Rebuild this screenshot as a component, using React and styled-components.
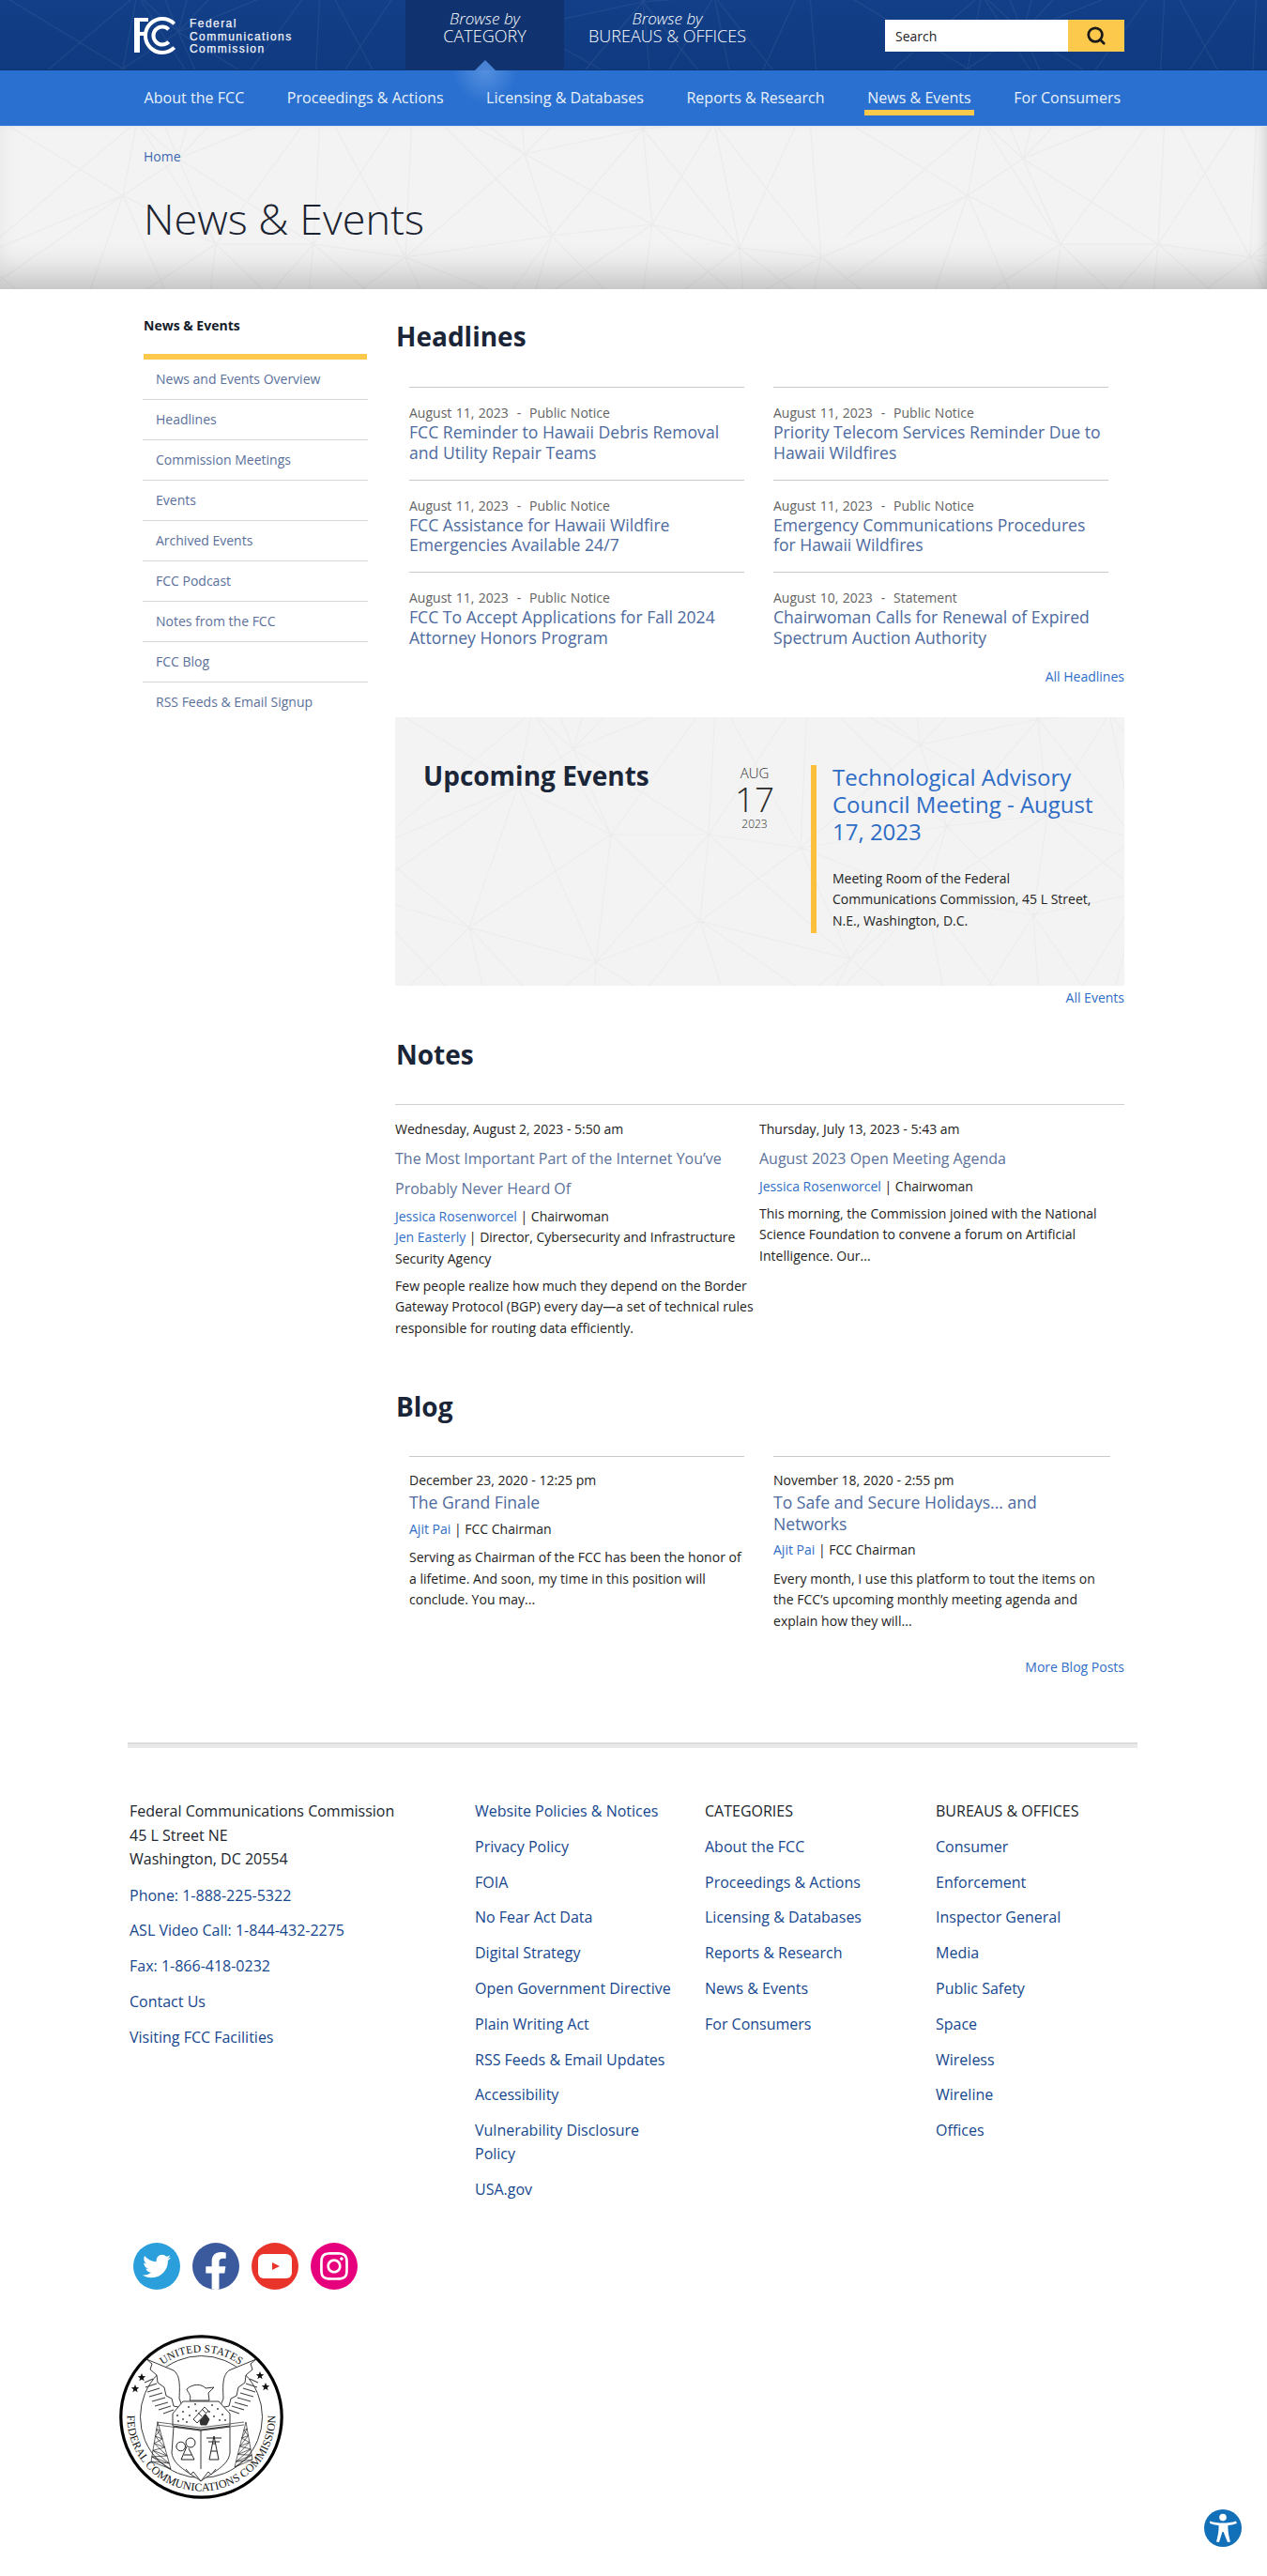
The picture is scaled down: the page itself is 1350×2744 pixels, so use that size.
import React from 'react';
import styled, { createGlobalStyle } from 'styled-components';
import { Search } from 'lucide-react';
import { FaTwitter, FaFacebookF, FaInstagram } from 'react-icons/fa';

const meshPattern = (stroke, width = 900, height = 560) => {
  const cols = 8;
  const rows = 5;
  const jitter = (a, b) => {
    const v = Math.sin(a * 12.9898 + b * 78.233) * 43758.5453;
    return v - Math.floor(v) - 0.5;
  };
  const cw = width / cols;
  const ch = height / rows;
  const pt = (i, j) => {
    const wi = ((i % cols) + cols) % cols;
    const wj = ((j % rows) + rows) % rows;
    return [i * cw + jitter(wi, wj) * cw * 0.7, j * ch + jitter(wj + 7, wi + 3) * ch * 0.7];
  };
  let d = '';
  for (let i = -1; i <= cols; i += 1) {
    for (let j = -1; j <= rows; j += 1) {
      const [x, y] = pt(i, j);
      [[1, 0], [0, 1], [1, 1], [-1, 1]].forEach(([a, b]) => {
        const [x2, y2] = pt(i + a, j + b);
        d += `M${x.toFixed(0)} ${y.toFixed(0)}L${x2.toFixed(0)} ${y2.toFixed(0)}`;
      });
    }
  }
  const svg = `<svg xmlns="http://www.w3.org/2000/svg" width="${width}" height="${height}"><path d="${d}" fill="none" stroke="${stroke}" stroke-width="1.2"/></svg>`;
  return `url("data:image/svg+xml,${encodeURIComponent(svg)}")`;
};

const darkMesh = meshPattern('rgba(255,255,255,0.06)');
const lightMesh = meshPattern('rgba(0,0,0,0.028)');

const Global = createGlobalStyle`
  html, body { margin: 0; padding: 0; background: #fff; }
  body { font-family: "Open Sans", "Noto Sans", sans-serif; color: #1c1c1c; }
  * { box-sizing: border-box; }
  a { text-decoration: none; color: inherit; }
`;

const Page = styled.div`
  width: 1350px;
  min-height: 2744px;
  position: relative;
  overflow: hidden;
`;

const TopBar = styled.header`
  height: 75px;
  display: flex;
  padding: 0 152px 0 142px;
  background-color: #113d85;
  background-image: ${darkMesh}, linear-gradient(180deg, #123f88 0%, #103a80 100%);
  border-bottom: 1px solid #0d3470;
`;

const Logo = styled.a`
  width: 290px;
  height: 74px;
  display: flex;
  align-items: flex-start;
  padding-top: 18px;
  gap: 13px;
  svg { flex: none; }
`;

const LogoText = styled.span`
  font-family: "Liberation Sans", Arial, sans-serif;
  font-size: 12px;
  font-weight: 400;
  line-height: 13.5px;
  letter-spacing: 1.45px;
  color: #f2f5fa;
  padding-top: 1px;
  -webkit-text-stroke: 0.25px #f2f5fa;
`;

const BrowseTab = styled.a`
  position: relative;
  width: ${(p) => p.$width}px;
  height: 74px;
  display: flex;
  flex-direction: column;
  align-items: center;
  padding-top: 11px;
  color: #fff;
  background: ${(p) => (p.$active ? '#10336f' : 'transparent')};
  ${(p) => p.$active && `
    &::before {
      content: "";
      position: absolute;
      left: 50%;
      top: 75px;
      width: 70px;
      height: 36px;
      transform: translateX(-50%);
      background: radial-gradient(ellipse at 50% 0, rgba(120,170,235,.55), rgba(120,170,235,0) 70%);
      z-index: 2;
    }
    &::after {
      content: "";
      position: absolute;
      left: 50%;
      bottom: -1px;
      transform: translateX(-50%);
      border-left: 11px solid transparent;
      border-right: 11px solid transparent;
      border-bottom: 11px solid #4a83d6;
    }
  `}
`;

const BrowseSmall = styled.span`
  font-size: 17px;
  font-style: italic;
  font-weight: 300;
  line-height: 18px;
`;

const BrowseBig = styled.span`
  font-size: 18px;
  font-weight: 300;
  line-height: 18px;
`;

const SearchForm = styled.form`
  margin: 21px 0 0 auto;
  width: 255px;
  height: 34px;
  display: flex;
`;

const SearchField = styled.div`
  flex: 1;
  background: #fff;
  font-size: 14px;
  line-height: 35px;
  padding-left: 11px;
  color: #1d1d1d;
`;

const SearchButton = styled.div`
  width: 60px;
  background: #fcc94d;
  display: flex;
  align-items: center;
  justify-content: center;
  color: #1a1a1a;
`;

const Nav = styled.nav`
  height: 59px;
  display: flex;
  padding: 0 0 0 150.5px;
  gap: 39.5px;
  background: #2a70d0;
`;

const NavItem = styled.a`
  height: 48px;
  padding: 20px 3px 0;
  font-size: 16px;
  line-height: 18px;
  letter-spacing: 0.04px;
  color: #e8f0fa;
  border-bottom: ${(p) => (p.$active ? '6px solid #fcc94d' : '0')};
`;

const Hero = styled.section`
  height: 174px;
  padding: 23px 0 0 153px;
  background-color: #f3f3f4;
  background-image: ${lightMesh};
  border-top: 1px solid #dbe7f0;
  box-shadow: inset 0 -34px 34px -18px rgba(0, 0, 0, 0.2), inset -8px 0 14px -8px rgba(0, 0, 0, 0.15);
`;

const Crumb = styled.a`
  display: block;
  font-size: 14px;
  line-height: 18px;
  color: #3c68b0;
`;

const PageTitle = styled.h1`
  margin: 27px 0 0;
  font-size: 45px;
  font-weight: 300;
  line-height: 60px;
  color: #1b2230;
`;

const Body = styled.div`
  display: flex;
  padding-left: 152px;
`;

const Sidebar = styled.aside`
  width: 240px;
  margin-right: 29px;
  padding-top: 30px;
`;

const SideTitle = styled.div`
  padding-left: 1px;
  font-size: 14px;
  font-weight: 700;
  line-height: 18px;
  color: #151d2b;
  padding-bottom: 21px;
`;

const SideBar = styled.div`
  height: 6px;
  margin: 0 1px;
  background: #fcc94d;
`;

const SideItem = styled.a`
  display: block;
  height: 43px;
  padding-left: 14px;
  font-size: 14px;
  line-height: 41px;
  color: #5a709b;
  border-bottom: ${(p) => (p.$last ? '0' : '1px solid #d6d6d6')};
`;

const Main = styled.main`
  width: 777px;
`;

const SectionTitle = styled.h2`
  margin: ${(p) => p.$top || 0}px 0 0;
  padding-left: 1px;
  font-size: 28px;
  font-weight: 700;
  line-height: 40px;
  color: #1a2537;
`;

const HeadlineGrid = styled.div`
  margin-top: 34px;
  padding-left: 15px;
  display: grid;
  grid-template-columns: 357px 357px;
  column-gap: 31px;
`;

const Headline = styled.article`
  height: 98.5px;
  border-top: 1px solid #c9c9c9;
  padding-top: 16px;
`;

const Meta = styled.div`
  font-size: 14px;
  line-height: 21px;
  color: #636363;
  white-space: pre;
  word-spacing: 0.8px;
`;

const CardTitle = styled.a`
  display: block;
  font-size: 17.6px;
  line-height: 21.5px;
  color: #4d6a9e;
`;

const MoreLink = styled.a`
  display: block;
  text-align: right;
  font-size: 14px;
  line-height: 20px;
  color: #2f6dc6;
  margin-top: ${(p) => p.$top || 3}px;
`;

const EventBox = styled.section`
  margin-top: 33px;
  height: 286px;
  display: flex;
  background-color: #f3f3f4;
  background-image: ${lightMesh};
`;

const EventHeading = styled.h2`
  width: 348px;
  margin: 42px 0 0;
  padding-left: 30px;
  font-size: 28px;
  font-weight: 700;
  line-height: 40px;
  color: #1a2537;
`;

const DateStack = styled.div`
  width: 70px;
  margin: 49px 25px 0 0;
  display: flex;
  flex-direction: column;
  align-items: center;
  font-weight: 300;
  color: #2a2a2a;
`;

const DateMonth = styled.span`
  font-size: 15px;
  line-height: 20px;
`;

const DateDay = styled.span`
  font-size: 37px;
  line-height: 36px;
`;

const DateYear = styled.span`
  font-size: 12px;
  line-height: 18px;
  margin-top: 0;
`;

const EventBody = styled.div`
  display: flow-root;
  align-self: flex-start;
  width: 320px;
  margin-top: 51px;
  padding: 0 0 2px 17px;
  border-left: 6px solid #fcc03c;
`;

const EventTitle = styled.a`
  display: block;
  margin-top: -2px;
  font-size: 24px;
  line-height: 29px;
  color: #2e6cc5;
`;

const EventText = styled.p`
  margin: 25px 0 0;
  font-size: 14px;
  line-height: 22.5px;
  color: #222;
`;

const NotesGrid = styled.div`
  margin-top: 33px;
  border-top: 1px solid #cfcfcf;
  padding-top: 16px;
  display: grid;
  grid-template-columns: 388px 370px;
`;

const Stamp = styled.div`
  font-size: 14px;
  line-height: 20px;
  color: #222;
`;

const NoteTitle = styled.a`
  display: block;
  margin-top: 5px;
  font-size: 16px;
  line-height: 32px;
  color: #5c729b;
`;

const Byline = styled.div`
  margin-top: ${(p) => p.$top || 3}px;
  font-size: 14px;
  line-height: 22.5px;
  color: #222;
`;

const Person = styled.a`
  color: #2f6dc6;
`;

const Summary = styled.p`
  margin: ${(p) => p.$top || 6.5}px 0 0;
  font-size: 14px;
  line-height: 22.5px;
  letter-spacing: 0.03px;
  color: #222;
`;

const BlogGrid = styled.div`
  margin-top: 33px;
  padding-left: 15px;
  display: grid;
  grid-template-columns: 357px 359px;
  column-gap: 31px;
`;

const BlogCard = styled.article`
  border-top: 1px solid #c9c9c9;
  padding-top: 15px;
`;

const BlogTitle = styled.a`
  display: block;
  margin-top: 2px;
  font-size: 17.6px;
  line-height: 22.5px;
  color: #4d6a9e;
`;

const Rule = styled.div`
  margin: 70px 0 0 136px;
  width: 1076px;
  height: 6px;
  background: #e9e9e9;
  border-top: 2px solid #dcdcdc;
`;

const Footer = styled.footer`
  margin-top: 55px;
  padding-left: 138px;
  display: grid;
  grid-template-columns: 368px 245px 246px 200px;
`;

const FooterColumn = styled.div`
  display: flex;
  flex-direction: column;
  align-items: flex-start;
  padding-right: ${(p) => p.$pad || 0}px;
`;

const Address = styled.div`
  font-size: 16px;
  line-height: 25.5px;
  color: #20252d;
  margin-bottom: 13px;
`;

const FooterLabel = styled.div`
  font-size: 16px;
  line-height: 25px;
  color: #20252d;
  margin-bottom: 12.8px;
`;

const FooterLink = styled.a`
  font-size: 16px;
  line-height: 25px;
  margin-bottom: 12.8px;
  color: #16478e;
`;

const SocialRow = styled.div`
  margin: 31px 0 0 142px;
  display: flex;
  gap: 13px;
`;

const SocialDisc = styled.a`
  width: 50px;
  height: 50px;
  border-radius: 50%;
  display: flex;
  align-items: center;
  justify-content: center;
  background: ${(p) => p.$bg};
  color: #fff;
  overflow: hidden;
`;

const SealWrap = styled.div`
  margin: 48px 0 0 127px;
  width: 175px;
  height: 175px;
`;

const AccessButton = styled.a`
  position: absolute;
  right: 27px;
  bottom: 31px;
  width: 40px;
  height: 40px;
`;

const SealText = styled.text`
  font-family: "Liberation Serif", "Times New Roman", serif;
  font-size: ${(p) => p.$size}px;
  letter-spacing: ${(p) => p.$track}px;
  fill: #111;
`;

const FccLogo = () => (
  <svg width="47" height="40" viewBox="0 0 47 40" aria-hidden="true">
    <path d="M1 1H16V5H7V16H15V20H7V38H1Z" fill="#fff" />
    <path d="M43.7 7.3A18 18 0 1 0 43.7 32.7" fill="none" stroke="#fff" strokeWidth="4" />
    <path d="M37.7 13.3A9.500 9.500 0 1 0 37.7 26.700" fill="none" stroke="#fff" strokeWidth="4" />
  </svg>
);

const YoutubeGlyph = () => (
  <svg width="36" height="26" viewBox="0 0 36 26" aria-hidden="true">
    <rect width="36" height="26" rx="6" fill="#fff" />
    <path d="M15 9l8 4-8 4z" fill="#e9342b" />
  </svg>
);

const AccessGlyph = () => (
  <svg width="40" height="40" viewBox="0 0 40 40" aria-hidden="true">
    <circle cx="20" cy="20" r="20" fill="#1270b8" />
    <circle cx="20" cy="8.6" r="3.8" fill="#fff" />
    <path d="M6 12.5c4 1.4 9 2 14 2s10-.6 14-2l.8 2.6c-3.4 1.2-6.6 1.8-9.4 2.1 0 5 .3 9 2.6 17.3l-3 .6L20.6 24h-1.2l-3.4 11.1-3-.6c2.3-8.3 2.6-12.300 2.6-17.300-2.800-.3-6-.9-9.400-2.100z" fill="#fff" />
  </svg>
);

const lerp = (a, b, t) => a + (b - a) * t;

const Tower = ({ apex, left, right }) => {
  const steps = [0.18, 0.36, 0.54, 0.72, 0.88, 1];
  const at = (side, t) => [lerp(apex[0], side[0], t), lerp(apex[1], side[1], t)];
  let d = `M${apex}L${left}M${apex}L${right}`;
  steps.forEach((t, i) => {
    const a = at(left, t);
    const b = at(right, t);
    d += `M${a}L${b}`;
    if (i > 0) {
      const pa = at(left, steps[i - 1]);
      const pb = at(right, steps[i - 1]);
      d += `M${pa}L${b}M${pb}L${a}`;
    }
  });
  return <path d={d} fill="none" stroke="#222" strokeWidth="0.7" />;
};

const Seal = () => (
  <svg width="175" height="175" viewBox="0 0 175 175" role="img" aria-label="Seal of the Federal Communications Commission">
    <defs>
      <path id="sealTop" d="M18.500 87.500A69 69 0 0 1 156.500 87.500" />
      <path id="sealBottom" d="M11.200 67A79 79 0 1 0 163.800 67" />
    </defs>
    <circle cx="87.500" cy="87.500" r="85.700" fill="#fff" stroke="#000" strokeWidth="3.200" />
    <circle cx="87.500" cy="87.500" r="65" fill="none" stroke="#222" strokeWidth="0.900" />
    <path d="M29 26A84 84 0 0 1 146 26" fill="none" stroke="#222" strokeWidth="0.800" />
    <SealText $size={11.5} $track={0.2}><textPath href="#sealTop" startOffset="50%" textAnchor="middle">UNITED STATES</textPath></SealText>
    <SealText $size={12} $track={0.15}><textPath href="#sealBottom" startOffset="50%" textAnchor="middle">FEDERAL COMMUNICATIONS COMMISSION</textPath></SealText>
    <g fill="#111">
      <path d="M24 41l1.200 3 3 .2-2.400 2 .8 3-2.600-1.700-2.600 1.700.8-3-2.400-2 3-.2z" />
      <path d="M17 53l1.200 3 3 .2-2.400 2 .8 3-2.600-1.700-2.600 1.700.8-3-2.400-2 3-.2z" />
      <path d="M150 39l1.200 3 3 .2-2.400 2 .8 3-2.600-1.700-2.600 1.700.8-3-2.400-2 3-.2z" />
      <path d="M156 51l1.200 3 3 .2-2.400 2 .8 3-2.600-1.700-2.600 1.700.8-3-2.400-2 3-.2z" />
    </g>
    <g fill="none" stroke="#444" strokeWidth="1.100">
      <path d="M27 51L36 47M28 56L40 52M30 61L43 57M32 66L46 62M35 71L49 67M38 76L52 72M42 80L55 76M47 84L58 80" />
      <path d="M148 51L139 47M147 56L135 52M145 61L132 57M143 66L129 62M140 71L126 67M137 76L123 72M133 80L120 76M128 84L117 80" />
    </g>
    <g fill="#fff" stroke="#222" strokeWidth="0.900" strokeLinejoin="round">
      <path d="M29 26L58 38C64 43 65 50 64 68L68 78L58 76L56 68L50 65L48 56L41 51L40 43L33 37L35 31Z" />
      <path d="M146 26L117 38C111 43 110 50 111 68L107 78L117 76L119 68L125 65L127 56L134 51L135 43L142 37L140 31Z" />
      <path d="M75 70C78 65 72 60 72 58C78 52 88 52 92 57L101 56L95 62L96 70Z" />
      <path d="M68 71H106L118 84L118 97L87 101L57 97L57 84Z" />
      <path d="M58 98L87 102L118 98L118 126C116 140 100 146 87 156C74 146 58 140 56 126Z" />
      <path d="M87 102V152" />
      <path d="M71 143L76 149L79 146L87 156L95 146L98 149L103 143" />
    </g>
    <path d="M40 93L86 99L133 93M40 96L86 102L133 96" fill="none" stroke="#444" strokeWidth="0.800" />
    <g fill="#333">
      {[[62,86],[68,82],[74,77],[81,74],[68,90],[75,86],[72,93],[63,92],[99,75],[105,79],[110,85],[101,87],[107,91],[113,91],[96,82],[82,81]].map(([x, y]) => (
        <circle key={`${x}-${y}`} cx={x} cy={y} r="0.900" />
      ))}
    </g>
    <g stroke="#222" fill="#fff" strokeWidth="0.900">
      <path d="M79 90L91 77L95 81L83 94Z" />
      <path d="M86 92L92 85L96 90L93 96L87 96Z" fill="#333" />
      <path d="M84 83l4 4M88 79l4 4" />
    </g>
    <Tower apex={[41, 93]} left={[34, 135]} right={[55, 143]} />
    <Tower apex={[135, 93]} left={[123, 141]} right={[142, 133]} />
    <g fill="none" stroke="#222" strokeWidth="1">
      <circle cx="65.700" cy="119" r="4.800" />
      <circle cx="76" cy="115" r="5" />
      <path d="M72 119L66 133H80L74 121M69 128H77" />
      <path d="M101 108L96 133M101 108L106 133M96 133H106M98 124H104M99 116H103M93 110H109M95 114H107" />
    </g>
  </svg>
);

const NAV = ['About the FCC', 'Proceedings & Actions', 'Licensing & Databases', 'Reports & Research', 'News & Events', 'For Consumers'];
const SIDE = ['News and Events Overview', 'Headlines', 'Commission Meetings', 'Events', 'Archived Events', 'FCC Podcast', 'Notes from the FCC', 'FCC Blog', 'RSS Feeds & Email Signup'];
const HEADLINES = [
  ['August 11, 2023  -  Public Notice', 'FCC Reminder to Hawaii Debris Removal and Utility Repair Teams'],
  ['August 11, 2023  -  Public Notice', 'Priority Telecom Services Reminder Due to Hawaii Wildfires'],
  ['August 11, 2023  -  Public Notice', 'FCC Assistance for Hawaii Wildfire Emergencies Available 24/7'],
  ['August 11, 2023  -  Public Notice', 'Emergency Communications Procedures for Hawaii Wildfires'],
  ['August 11, 2023  -  Public Notice', 'FCC To Accept Applications for Fall 2024 Attorney Honors Program'],
  ['August 10, 2023  -  Statement', 'Chairwoman Calls for Renewal of Expired Spectrum Auction Authority'],
];
const F_CONTACT = ['Phone: 1-888-225-5322', 'ASL Video Call: 1-844-432-2275', 'Fax: 1-866-418-0232', 'Contact Us', 'Visiting FCC Facilities'];
const F_POLICY = ['Website Policies & Notices', 'Privacy Policy', 'FOIA', 'No Fear Act Data', 'Digital Strategy', 'Open Government Directive', 'Plain Writing Act', 'RSS Feeds & Email Updates', 'Accessibility', 'Vulnerability Disclosure Policy', 'USA.gov'];
const F_CATS = ['About the FCC', 'Proceedings & Actions', 'Licensing & Databases', 'Reports & Research', 'News & Events', 'For Consumers'];
const F_BUREAUS = ['Consumer', 'Enforcement', 'Inspector General', 'Media', 'Public Safety', 'Space', 'Wireless', 'Wireline', 'Offices'];

export default function App() {
  return (
    <Page>
      <Global />
      <TopBar>
        <Logo href="#">
          <FccLogo />
          <LogoText>Federal<br />Communications<br />Commission</LogoText>
        </Logo>
        <BrowseTab href="#" $active $width={169}>
          <BrowseSmall>Browse by</BrowseSmall>
          <BrowseBig>CATEGORY</BrowseBig>
        </BrowseTab>
        <BrowseTab href="#" $width={220}>
          <BrowseSmall>Browse by</BrowseSmall>
          <BrowseBig>BUREAUS &amp; OFFICES</BrowseBig>
        </BrowseTab>
        <SearchForm>
          <SearchField>Search</SearchField>
          <SearchButton><Search size={22} strokeWidth={3} /></SearchButton>
        </SearchForm>
      </TopBar>
      <Nav>
        {NAV.map((n) => <NavItem href="#" key={n} $active={n === 'News & Events'}>{n}</NavItem>)}
      </Nav>
      <Hero>
        <Crumb href="#">Home</Crumb>
        <PageTitle>News &amp; Events</PageTitle>
      </Hero>
      <Body>
        <Sidebar>
          <SideTitle>News &amp; Events</SideTitle>
          <SideBar />
          {SIDE.map((s, i) => <SideItem href="#" key={s} $last={i === SIDE.length - 1}>{s}</SideItem>)}
        </Sidebar>
        <Main>
          <SectionTitle $top={30}>Headlines</SectionTitle>
          <HeadlineGrid>
            {HEADLINES.map(([m, t]) => (
              <Headline key={t}>
                <Meta>{m}</Meta>
                <CardTitle href="#">{t}</CardTitle>
              </Headline>
            ))}
          </HeadlineGrid>
          <MoreLink href="#">All Headlines</MoreLink>
          <EventBox>
            <EventHeading>Upcoming Events</EventHeading>
            <DateStack>
              <DateMonth>AUG</DateMonth>
              <DateDay>17</DateDay>
              <DateYear>2023</DateYear>
            </DateStack>
            <EventBody>
              <EventTitle href="#">Technological Advisory Council Meeting - August 17, 2023</EventTitle>
              <EventText>Meeting Room of the Federal Communications Commission, 45 L Street, N.E., Washington, D.C.</EventText>
            </EventBody>
          </EventBox>
          <MoreLink href="#">All Events</MoreLink>
          <SectionTitle $top={30}>Notes</SectionTitle>
          <NotesGrid>
            <div>
              <Stamp>Wednesday, August 2, 2023 - 5:50 am</Stamp>
              <NoteTitle href="#">The Most Important Part of the Internet You’ve Probably Never Heard Of</NoteTitle>
              <Byline>
                <Person href="#">Jessica Rosenworcel</Person> | Chairwoman<br />
                <Person href="#">Jen Easterly</Person> | Director, Cybersecurity and Infrastructure Security Agency
              </Byline>
              <Summary>Few people realize how much they depend on the Border Gateway Protocol (BGP) every day—a set of technical rules responsible for routing data efficiently.</Summary>
            </div>
            <div>
              <Stamp>Thursday, July 13, 2023 - 5:43 am</Stamp>
              <NoteTitle href="#">August 2023 Open Meeting Agenda</NoteTitle>
              <Byline><Person href="#">Jessica Rosenworcel</Person> | Chairwoman</Byline>
              <Summary>This morning, the Commission joined with the National Science Foundation to convene a forum on Artificial Intelligence. Our...</Summary>
            </div>
          </NotesGrid>
          <SectionTitle $top={52}>Blog</SectionTitle>
          <BlogGrid>
            <BlogCard>
              <Stamp>December 23, 2020 - 12:25 pm</Stamp>
              <BlogTitle href="#">The Grand Finale</BlogTitle>
              <Byline $top={6}><Person href="#">Ajit Pai</Person> | FCC Chairman</Byline>
              <Summary $top={8}>Serving as Chairman of the FCC has been the honor of a lifetime. And soon, my time in this position will conclude. You may...</Summary>
            </BlogCard>
            <BlogCard>
              <Stamp>November 18, 2020 - 2:55 pm</Stamp>
              <BlogTitle href="#">To Safe and Secure Holidays... and Networks</BlogTitle>
              <Byline $top={6}><Person href="#">Ajit Pai</Person> | FCC Chairman</Byline>
              <Summary $top={8}>Every month, I use this platform to tout the items on the FCC’s upcoming monthly meeting agenda and explain how they will...</Summary>
            </BlogCard>
          </BlogGrid>
          <MoreLink href="#" $top={28}>More Blog Posts</MoreLink>
        </Main>
      </Body>
      <Rule />
      <Footer>
        <FooterColumn>
          <Address>Federal Communications Commission<br />45 L Street NE<br />Washington, DC 20554</Address>
          {F_CONTACT.map((f) => <FooterLink href="#" key={f}>{f}</FooterLink>)}
        </FooterColumn>
        <FooterColumn $pad={30}>
          {F_POLICY.map((f) => <FooterLink href="#" key={f}>{f}</FooterLink>)}
        </FooterColumn>
        <FooterColumn>
          <FooterLabel>CATEGORIES</FooterLabel>
          {F_CATS.map((f) => <FooterLink href="#" key={f}>{f}</FooterLink>)}
        </FooterColumn>
        <FooterColumn>
          <FooterLabel>BUREAUS &amp; OFFICES</FooterLabel>
          {F_BUREAUS.map((f) => <FooterLink href="#" key={f}>{f}</FooterLink>)}
        </FooterColumn>
      </Footer>
      <SocialRow>
        <SocialDisc href="#" $bg="#2a9fdc" aria-label="Twitter"><FaTwitter size={30} /></SocialDisc>
        <SocialDisc href="#" $bg="#3b5a9e" aria-label="Facebook"><FaFacebookF size={40} style={{ marginTop: 10 }} /></SocialDisc>
        <SocialDisc href="#" $bg="#e9342b" aria-label="YouTube"><YoutubeGlyph /></SocialDisc>
        <SocialDisc href="#" $bg="#e6007e" aria-label="Instagram"><FaInstagram size={34} /></SocialDisc>
      </SocialRow>
      <SealWrap><Seal /></SealWrap>
      <AccessButton href="#" aria-label="Accessibility"><AccessGlyph /></AccessButton>
    </Page>
  );
}
